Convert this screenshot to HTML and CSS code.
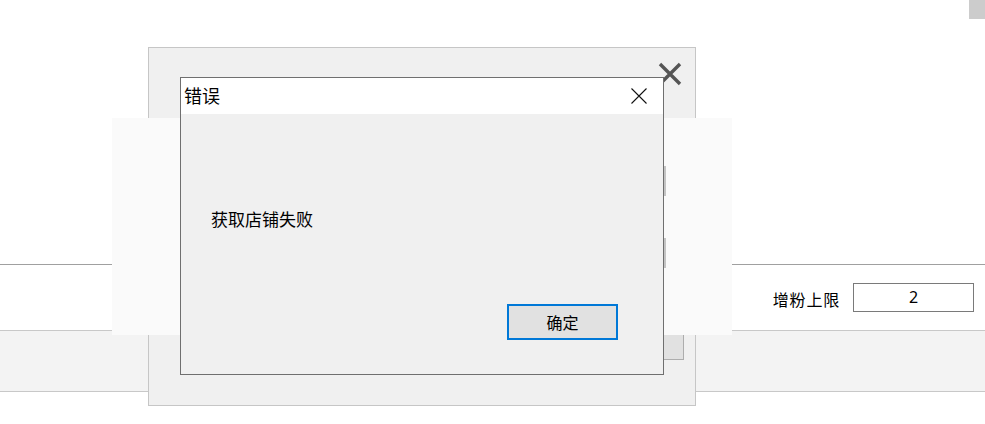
FILE: index.html
```html
<!DOCTYPE html>
<html lang="zh">
<head>
<meta charset="utf-8">
<title>错误</title>
<link rel="stylesheet" href="styles.css">
</head>
<body>
<div class="page">
  <div class="top-area">
    <div class="corner-block"></div>
  </div>
  <div class="form-row">
    <label class="field-label">增粉上限</label>
    <div class="field-input">2</div>
  </div>
  <div class="band"></div>

  <div class="outer-window">
    <svg class="big-close" width="24" height="24" viewBox="0 0 24 24">
      <path d="M2 2 L22 22 M22 2 L2 22" stroke="#555" stroke-width="3.4" fill="none"/>
    </svg>
    <div class="hidden-button"></div>
  </div>

  <div class="overlay">
    <div class="faint-edge"></div>
    <div class="faint-edge"></div>
  </div>

  <div class="dialog">
    <div class="dialog-title">
      <span class="title-text">错误</span>
      <svg class="small-close" width="16" height="16" viewBox="0 0 16 16">
        <path d="M0.5 0.5 L15.5 15.5 M15.5 0.5 L0.5 15.5" stroke="#111" stroke-width="1.1" fill="none"/>
      </svg>
    </div>
    <div class="dialog-body">
      <div class="message">获取店铺失败</div>
      <div class="button-row">
        <button class="ok-button">确定</button>
      </div>
    </div>
  </div>
</div>
</body>
</html>
```

FILE: styles.css
```css
html, body {
  margin: 0;
  padding: 0;
  background: #ffffff;
}

body {
  font-family: "Noto Sans CJK SC", "Microsoft YaHei", sans-serif;
  color: #000;
}

.page {
  position: relative;
  width: 985px;
  height: 424px;
  overflow: hidden;
  background: #ffffff;
}

.top-area {
  height: 264px;
  display: flex;
  justify-content: flex-end;
  align-items: flex-start;
}

.corner-block {
  width: 16px;
  height: 19px;
  background: #cccccc;
}

.form-row {
  height: 65px;
  border-top: 1px solid #a0a0a0;
  border-bottom: 1px solid #c8c8c8;
  background: #ffffff;
  display: flex;
  justify-content: flex-end;
  align-items: center;
  gap: 13px;
  padding-right: 11px;
}

.field-label {
  font-size: 16px;
  line-height: 20px;
  letter-spacing: 0.8px;
  padding-top: 2px;
}

.field-input {
  width: 119px;
  height: 27px;
  border: 1px solid #7a7a7a;
  background: #fff;
  font-family: "Noto Sans", "Liberation Sans", sans-serif;
  font-size: 16px;
  line-height: 27px;
  text-align: center;
}

.band {
  height: 60px;
  background: #f3f3f3;
  border-bottom: 1px solid #c8c8c8;
}

.outer-window {
  position: absolute;
  left: 148px;
  top: 47px;
  width: 535px;
  height: 312px;
  background: #f0f0f0;
  border: 1px solid #c6c6c6;
  display: flex;
  flex-direction: column;
  justify-content: flex-end;
  align-items: flex-end;
  padding: 0 11px 45px 0;
}

.big-close {
  position: absolute;
  left: 509px;
  top: 14px;
}

.hidden-button {
  width: 120px;
  height: 28px;
  background: #e1e1e1;
  border: 1px solid #adadad;
}

.overlay {
  position: absolute;
  left: 112px;
  top: 118px;
  width: 620px;
  height: 217px;
  background: #fafafa;
  display: flex;
  flex-direction: column;
  align-items: flex-start;
  gap: 42px;
  padding: 48px 0 0 552px;
  box-sizing: border-box;
}

.faint-edge {
  width: 2px;
  height: 30px;
  background: #c4c4c4;
}

.dialog {
  position: absolute;
  left: 180px;
  top: 77px;
  width: 482px;
  height: 296px;
  border: 1px solid #6f6f6f;
  background: #f0f0f0;
  display: flex;
  flex-direction: column;
}

.dialog-title {
  height: 36px;
  box-sizing: border-box;
  background: #ffffff;
  display: flex;
  align-items: center;
  justify-content: space-between;
  padding: 0 16px 3px 3px;
}

.title-text {
  font-size: 18px;
  line-height: 24px;
}

.small-close {
  display: block;
  margin-top: 3px;
}

.dialog-body {
  flex: 1;
  display: flex;
  flex-direction: column;
  padding: 95px 45px 34px 30px;
}

.message {
  font-size: 17px;
  line-height: 20px;
}

.button-row {
  margin-top: auto;
  display: flex;
  justify-content: flex-end;
}

.ok-button {
  width: 111px;
  height: 36px;
  box-sizing: border-box;
  border: 2px solid #0078d7;
  background: #e1e1e1;
  font-family: "Noto Sans CJK SC", sans-serif;
  font-size: 16px;
  color: #000;
  padding: 0;
  line-height: 30px;
}
```
